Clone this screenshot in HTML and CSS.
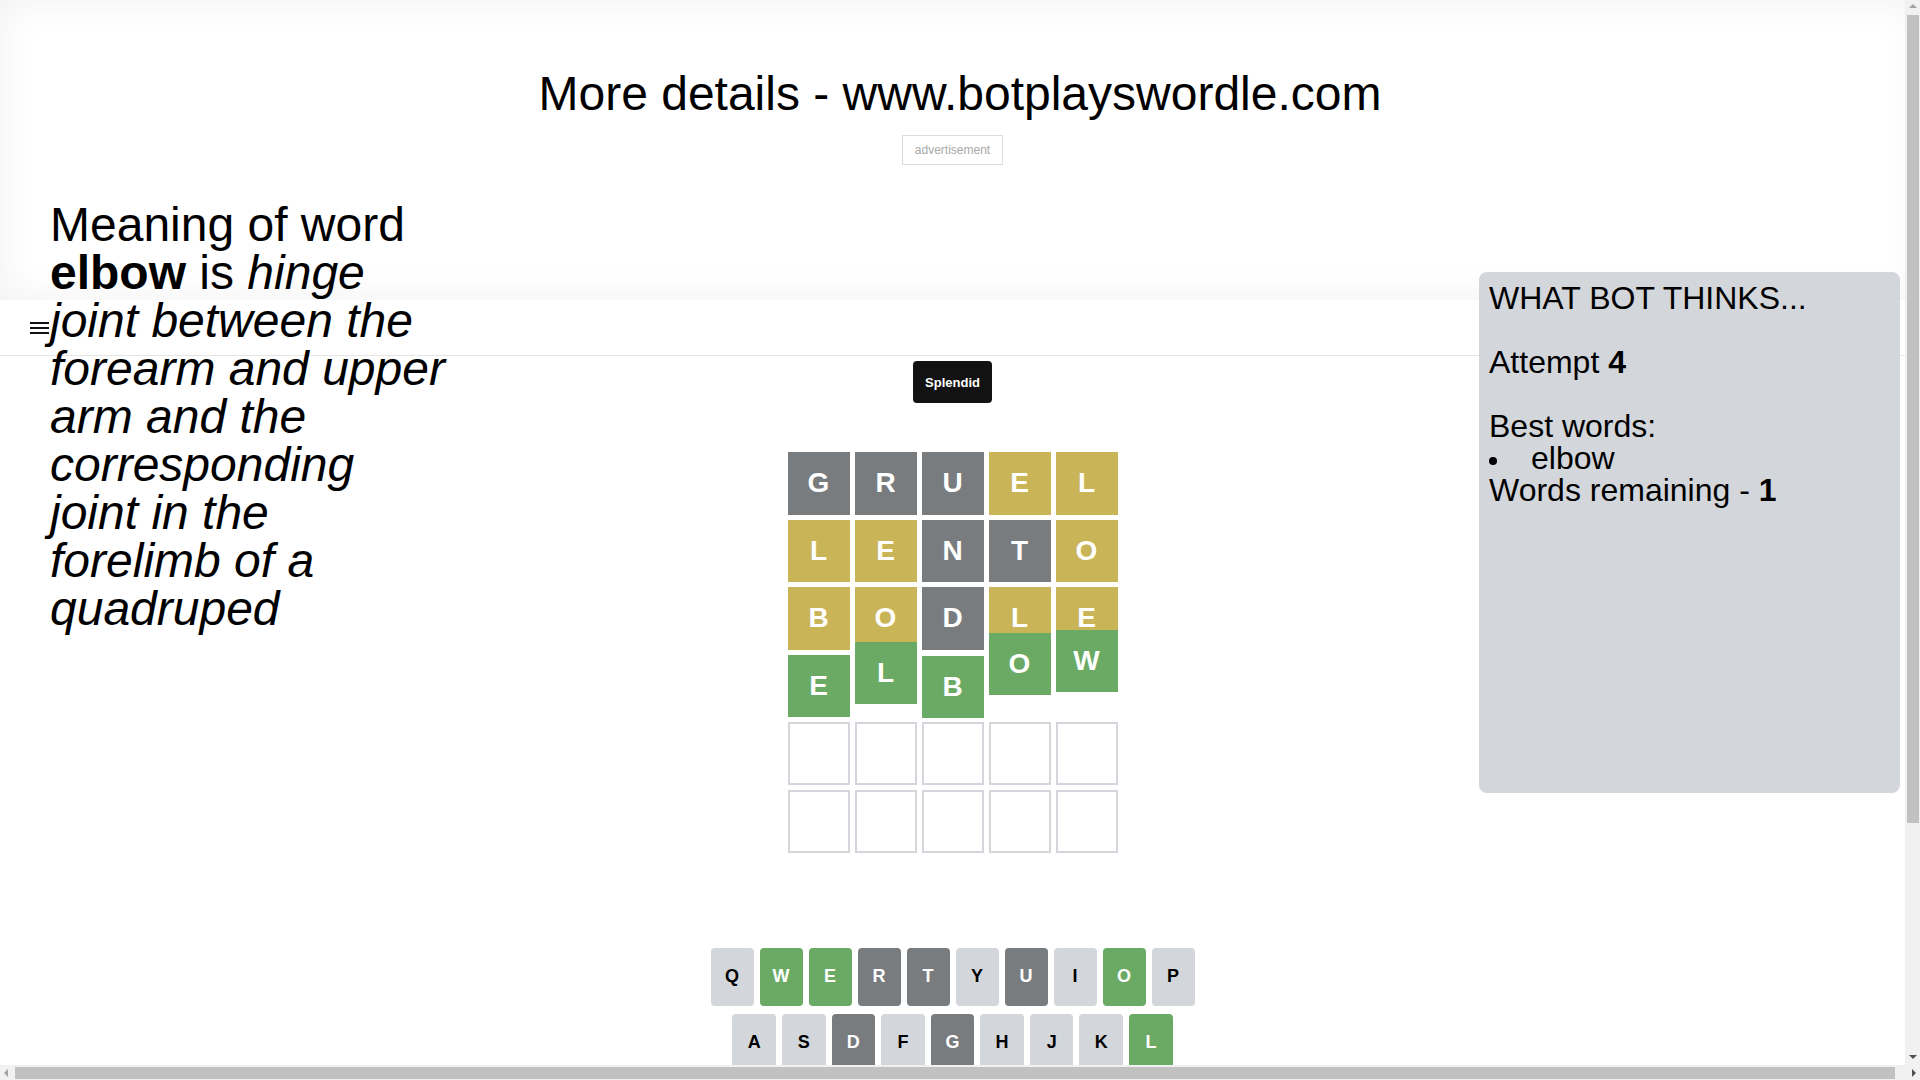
FILE: index.html
```html
<!DOCTYPE html>
<html lang="en">
<head>
<meta charset="utf-8">
<title>Bot plays Wordle</title>
<link rel="stylesheet" href="styles.css">
</head>
<body>
<section class="top">
  <h1 class="title">More details - www.botplayswordle.com</h1>
  <div class="ad">advertisement</div>
</section>
<div class="page">
  <header class="bar">
    <svg class="menu" viewBox="0 0 19 14" aria-hidden="true">
      <rect x="0" y="1" width="19" height="2" fill="#111"/>
      <rect x="0" y="6" width="19" height="2" fill="#111"/>
      <rect x="0" y="11" width="19" height="2" fill="#111"/>
    </svg>
  </header>
  <main class="game">
    <div class="toast">Splendid</div>
    <div class="board">
      <div class="tile x">G</div><div class="tile x">R</div><div class="tile x">U</div><div class="tile y">E</div><div class="tile y">L</div>
      <div class="tile y">L</div><div class="tile y">E</div><div class="tile x">N</div><div class="tile x">T</div><div class="tile y">O</div>
      <div class="tile y">B</div><div class="tile y">O</div><div class="tile x">D</div><div class="tile y">L</div><div class="tile y">E</div>
      <div class="tile g">E</div><div class="tile g up13">L</div><div class="tile g down1">B</div><div class="tile g up22">O</div><div class="tile g up25">W</div>
      <div class="tile empty"></div><div class="tile empty"></div><div class="tile empty"></div><div class="tile empty"></div><div class="tile empty"></div>
      <div class="tile empty"></div><div class="tile empty"></div><div class="tile empty"></div><div class="tile empty"></div><div class="tile empty"></div>
    </div>
    <div class="keyboard">
      <div class="krow">
        <div class="key">Q</div><div class="key g">W</div><div class="key g">E</div><div class="key x">R</div><div class="key x">T</div><div class="key">Y</div><div class="key x">U</div><div class="key">I</div><div class="key g">O</div><div class="key">P</div>
      </div>
      <div class="krow mid">
        <div class="key">A</div><div class="key">S</div><div class="key x">D</div><div class="key">F</div><div class="key x">G</div><div class="key">H</div><div class="key">J</div><div class="key">K</div><div class="key g">L</div>
      </div>
    </div>
  </main>
</div>
<aside class="meaning">Meaning of word <b>elbow</b> is <i>hinge joint between the forearm and upper arm and the corresponding joint in the forelimb of a quadruped</i></aside>
<aside class="bot">WHAT BOT THINKS...<br><br>Attempt <b>4</b><br><br>Best words:<ul class="best"><li>elbow</li></ul>Words remaining - <b>1</b></aside>
<div class="vbar"><span class="arr up"></span><div class="vthumb"></div><span class="arr down"></span></div>
<div class="hbar"><span class="arr left"></span><div class="hthumb"></div><span class="arr right"></span></div>
</body>
</html>
```
FILE: styles.css
```css
html { overflow: hidden; }
body {
  margin: 0;
  width: 1920px;
  height: 1080px;
  overflow: hidden;
  position: relative;
  background: #fff;
  color: #000;
  font-family: "Liberation Sans", Arial, sans-serif;
}

.top {
  width: 1920px;
  height: 300px;
  box-sizing: border-box;
  padding-top: 66px;
  display: flex;
  flex-direction: column;
  align-items: center;
  box-shadow: inset 0 0 40px rgba(0, 0, 0, 0.06);
}
.title {
  margin: 0;
  font-size: 48px;
  font-weight: 400;
  line-height: 55px;
}
.ad {
  margin: 14px 15px 0 0;
  border: 1px solid #dcdcdc;
  padding: 7px 12px;
  font-size: 12px;
  line-height: 14px;
  color: #a9a9a9;
}

.page { width: 1905px; }
.bar {
  height: 55px;
  border-bottom: 1px solid #e6e6e6;
  display: flex;
  align-items: center;
  padding-left: 30px;
}
.menu { width: 19px; height: 14px; display: block; }

.game {
  display: flex;
  flex-direction: column;
  align-items: center;
}
.toast {
  margin-top: 5px;
  height: 42px;
  padding: 0 12px;
  display: flex;
  align-items: center;
  background: #121212;
  color: #fff;
  font-weight: 700;
  font-size: 13px;
  border-radius: 4px;
}
.board {
  margin-top: 49px;
  display: grid;
  grid-template-columns: repeat(5, 62px);
  grid-auto-rows: 62.6px;
  gap: 5px;
}
.tile {
  display: flex;
  align-items: center;
  justify-content: center;
  box-sizing: border-box;
  font-size: 28px;
  font-weight: 700;
  color: #fff;
}
.empty { border: 2px solid #d3d6da; background: #fff; }
.up13 { transform: translateY(-13px); }
.down1 { transform: translateY(1px); }
.up22 { transform: translateY(-22px); }
.up25 { transform: translateY(-25px); }

.keyboard {
  margin-top: 95px;
  display: flex;
  flex-direction: column;
  gap: 8px;
}
.krow {
  display: flex;
  justify-content: center;
  gap: 6px;
}
.key {
  width: 43px;
  height: 58px;
  border-radius: 4px;
  background: #d3d6da;
  display: flex;
  align-items: center;
  justify-content: center;
  font-weight: 700;
  font-size: 18px;
  color: #000;
}
.krow.mid .key { width: 43.6px; }

.g { background: #6aaa64; color: #fff; }
.y { background: #c9b458; color: #fff; }
.x { background: #787c7e; color: #fff; }

.meaning {
  position: absolute;
  left: 50px;
  top: 201px;
  width: 398px;
  font-size: 48px;
  line-height: 48px;
}

.bot {
  position: absolute;
  left: 1479px;
  top: 272px;
  width: 421px;
  height: 521px;
  box-sizing: border-box;
  padding: 10px 10px;
  background: #d3d6da;
  border-radius: 8px;
  font-size: 32px;
  line-height: 32px;
}
.best { list-style: none; margin: 0; padding: 0; }
.best li::before {
  content: "";
  display: inline-block;
  width: 8px;
  height: 8px;
  margin-right: 34px;
  border-radius: 50%;
  background: #000;
  vertical-align: 4px;
}

/* scrollbars drawn over the page edge */
.vbar {
  position: absolute;
  right: 0;
  top: 0;
  width: 15px;
  height: 1065px;
  background: #f1f1f1;
}
.vthumb {
  position: absolute;
  left: 2px;
  right: 1px;
  top: 15px;
  height: 808px;
  background: #c1c1c1;
}
.hbar {
  position: absolute;
  left: 0;
  bottom: 0;
  width: 1920px;
  height: 15px;
  background: #f1f1f1;
}
.hthumb {
  position: absolute;
  top: 2px;
  bottom: 1px;
  left: 15px;
  width: 1880px;
  background: #c1c1c1;
}
.arr {
  position: absolute;
  width: 0;
  height: 0;
  border: 4px solid transparent;
}
.arr.up { left: 4px; top: 4px; border-top: 0; border-bottom-color: #a3a3a3; }
.arr.down { left: 4px; bottom: 6px; border-bottom: 0; border-top-color: #505050; }
.arr.left { left: 4px; top: 4px; border-left: 0; border-right-color: #a3a3a3; }
.arr.right { right: 4px; top: 4px; border-right: 0; border-left-color: #505050; }
```
